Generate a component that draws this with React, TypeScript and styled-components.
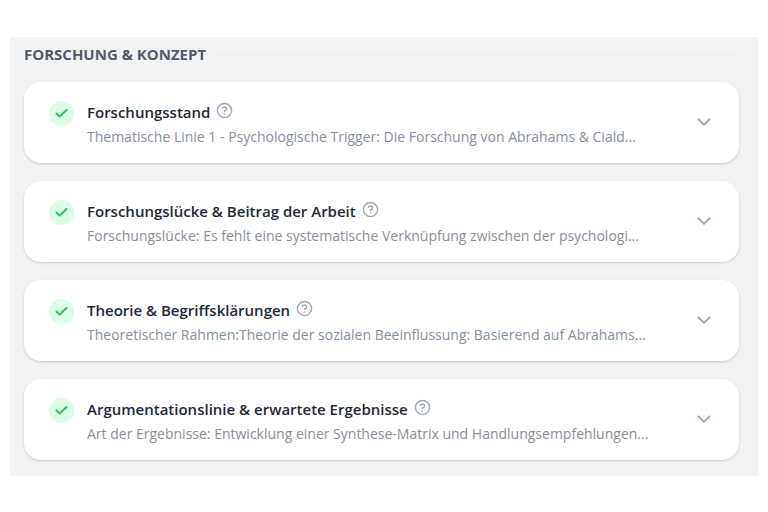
import React, { useState } from "react";
import styled, { createGlobalStyle } from "styled-components";

const GlobalStyle = createGlobalStyle`
  *, *::before, *::after { box-sizing: border-box; }
  body {
    margin: 0;
    background: #ffffff;
    font-family: "Segoe UI", "Open Sans", "Noto Sans", sans-serif;
  }
  h2, h3, p { margin: 0; }
  button {
    padding: 0;
    border: 0;
    background: none;
    font: inherit;
    cursor: pointer;
  }
  svg { display: block; }
`;

const Page = styled.main`
  padding: 37px 9px 37px 10px;
`;

const Panel = styled.section`
  padding: 5px 20px 16px 14px;
  background: #f2f3f5;
`;

const SectionHeader = styled.header`
  display: flex;
  align-items: center;
  gap: 12px;
  margin-bottom: 16px;
`;

const SectionTitle = styled.h2`
  color: #535b6b;
  font-size: 15px;
  font-weight: 700;
  line-height: 24px;
  white-space: nowrap;
`;

const Rule = styled.span`
  flex: 1;
  height: 1px;
  background: #e9ebee;
`;

const CardList = styled.div`
  display: flex;
  flex-direction: column;
  gap: 18px;
`;

const Card = styled.article`
  display: flex;
  align-items: center;
  padding: 17px 25px 14px;
  border-radius: 17px;
  background: #ffffff;
  box-shadow: 0 1px 3px rgba(0, 0, 0, 0.12), 0 1px 2px rgba(0, 0, 0, 0.06);
`;

const Status = styled.span`
  display: grid;
  place-items: center;
  flex: none;
  align-self: flex-start;
  width: 25px;
  height: 25px;
  margin: 2px 13px 0 0;
  border-radius: 50%;
  background: #dcfce7;
  color: #22c55e;
`;

const Content = styled.div`
  flex: 1;
  min-width: 0;
`;

const TitleRow = styled.div`
  display: flex;
  align-items: flex-start;
  gap: 6px;
`;

const Title = styled.h3`
  color: #1e293b;
  font-size: 15px;
  font-weight: 600;
  line-height: 26px;
  white-space: nowrap;
`;

const IconButton = styled.button`
  flex: none;
  color: #a0a8b8;
`;

const HelpButton = styled(IconButton)`
  padding: 3px 0;
`;

const ToggleButton = styled(IconButton)`
  padding-bottom: 4px;
`;

const Summary = styled.p`
  overflow: hidden;
  color: #8590a2;
  font-size: 14px;
  line-height: 24px;
  white-space: nowrap;
  text-overflow: ellipsis;
`;

const CheckIcon = () => (
  <svg width="15" height="15" viewBox="0 0 24 24" fill="none" stroke="currentColor" strokeWidth="3.2" strokeLinecap="round" strokeLinejoin="round" aria-hidden="true">
    <path d="M4 12l5 5L20 6.500" />
  </svg>
);

const HelpIcon = () => (
  <svg width="17" height="17" viewBox="0 0 24 24" fill="none" stroke="currentColor" strokeWidth="2" strokeLinecap="round" strokeLinejoin="round" aria-hidden="true">
    <circle cx="12" cy="12" r="10" />
    <path d="M9.09 9a3 3 0 0 1 5.83 1c0 2-3 3-3 3" />
    <path d="M12 17h.01" />
  </svg>
);

const ChevronIcon = () => (
  <svg width="20" height="20" viewBox="0 0 24 24" fill="none" stroke="currentColor" strokeWidth="2.4" strokeLinecap="round" strokeLinejoin="round" aria-hidden="true">
    <path d="M5.500 9l6.500 6.500L18.500 9" />
  </svg>
);

const entries = [
  {
    title: "Forschungsstand",
    summary: "Thematische Linie 1 - Psychologische Trigger: Die Forschung von Abrahams & Ciald...",
  },
  {
    title: "Forschungslücke & Beitrag der Arbeit",
    summary: "Forschungslücke: Es fehlt eine systematische Verknüpfung zwischen der psychologi...",
  },
  {
    title: "Theorie & Begriffsklärungen",
    summary: "Theoretischer Rahmen:Theorie der sozialen Beeinflussung: Basierend auf Abrahams...",
  },
  {
    title: "Argumentationslinie & erwartete Ergebnisse",
    summary: "Art der Ergebnisse: Entwicklung einer Synthese-Matrix und Handlungsempfehlungen...",
  },
];

export default function App() {
  const [open, setOpen] = useState<string | null>(null);
  return (
    <>
      <GlobalStyle />
      <Page>
        <Panel>
          <SectionHeader>
            <SectionTitle>FORSCHUNG &amp; KONZEPT</SectionTitle>
            <Rule />
          </SectionHeader>
          <CardList>
            {entries.map(({ title, summary }) => (
              <Card key={title}>
                <Status>
                  <CheckIcon />
                </Status>
                <Content>
                  <TitleRow>
                    <Title>{title}</Title>
                    <HelpButton type="button" aria-label={`Hilfe: ${title}`}>
                      <HelpIcon />
                    </HelpButton>
                  </TitleRow>
                  <Summary>{summary}</Summary>
                </Content>
                <ToggleButton
                  type="button"
                  aria-label={`${title} aufklappen`}
                  aria-expanded={open === title}
                  onClick={() => setOpen(open === title ? null : title)}
                >
                  <ChevronIcon />
                </ToggleButton>
              </Card>
            ))}
          </CardList>
        </Panel>
      </Page>
    </>
  );
}
